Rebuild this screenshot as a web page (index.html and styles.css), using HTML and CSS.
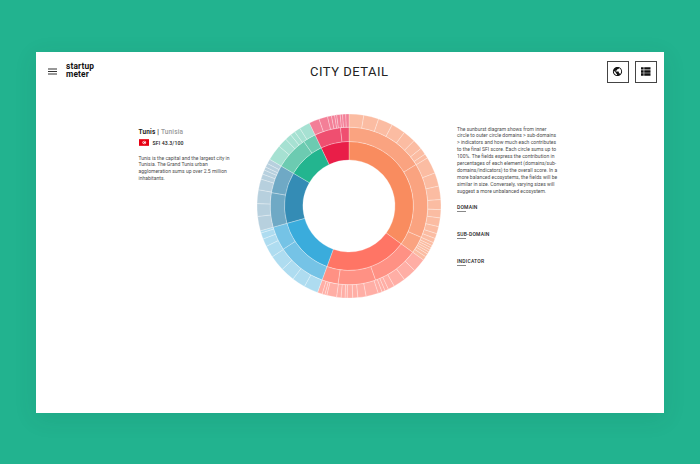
FILE: index.html
```html
<!DOCTYPE html>
<html lang="en">
<head>
<meta charset="utf-8">
<title>City detail</title>
<link rel="stylesheet" href="styles.css">
</head>
<body>
<div class="window">
  <header class="bar">
    <div class="brand">
      <svg class="menu" viewBox="0 0 9 7"><path d="M0 1h9M0 3.500h9M0 6h9"/></svg>
      <div class="logo">startup<br>meter</div>
    </div>
    <h1>CITY DETAIL</h1>
    <nav class="actions">
      <div class="button"><svg class="globe" viewBox="0 0 24 24"><path d="M12 2C6.480 2 2 6.480 2 12s4.480 10 10 10 10-4.480 10-10S17.520 2 12 2zm-1 17.930c-3.950-.490-7-3.850-7-7.930 0-.620.080-1.210.210-1.790L9 15v1c0 1.100.9 2 2 2v1.930zm6.900-2.540c-.260-.810-1-1.390-1.900-1.390h-1v-3c0-.550-.450-1-1-1H8v-2h2c.550 0 1-.450 1-1V7h2c1.100 0 2-.9 2-2v-.410c2.930 1.190 5 4.060 5 7.410 0 2.080-.8 3.970-2.100 5.390z"/></svg></div>
      <div class="button"><svg class="list" viewBox="0 0 10 9"><path d="M0 0h2.800v2.500H0zM3.400 0H10v2.500H3.400zM0 3.200h2.800v2.500H0zM3.400 3.200H10v2.500H3.400zM0 6.400h2.800v2.500H0zM3.400 6.400H10v2.500H3.400z"/></svg></div>
    </nav>
  </header>
  <main class="content">
    <section class="city">
      <h2>Tunis | <span>Tunisia</span></h2>
      <div class="score">
        <svg class="flag" viewBox="0 0 11 7"><path class="field" d="M0 0h11v7H0z"/><circle class="disc" cx="5.500" cy="3.500" r="1.900"/><circle class="field" cx="5.600" cy="3.500" r="1.200"/><circle class="disc" cx="6" cy="3.500" r=".8"/></svg>
        <span>SFI 43.3/100</span>
      </div>
      <p>Tunis is the capital and the largest city in<br>Tunisia. The Grand Tunis urban<br>agglomeration sums up over 2.5 million<br>inhabitants.</p>
    </section>
    <svg class="sunburst" id="sunburst" viewBox="-93 -93 186 186"></svg>
    <section class="info">
      <p>The sunburst diagram shows from inner<br>circle to outer circle domains &gt; sub-domains<br>&gt; indicators and how much each contributes<br>to the final SFI score. Each circle sums up to<br>100%. The fields express the contribution in<br>percentages of each element (domains/sub-<br>domains/indicators) to the overall score. In a<br>more balanced ecosystems, the fields will be<br>similar in size. Conversely, varying sizes will<br>suggest a more unbalanced ecosystem.</p>
      <h3>DOMAIN</h3>
      <h3>SUB-DOMAIN</h3>
      <h3>INDICATOR</h3>
    </section>
  </main>
</div>
<script src="chart.js"></script>
</body>
</html>
```
FILE: styles.css
```css
* { box-sizing: border-box; }
body {
  margin: 0;
  height: 464px;
  overflow: hidden;
  padding: 52px 36px 51px;
  background: #22b38f;
  color: #222;
  font-family: Roboto, "Liberation Sans", sans-serif;
}
.window {
  height: 361px;
  background: #fff;
  box-shadow: 0 5px 22px rgba(0, 60, 45, .1);
}
.bar {
  display: grid;
  grid-template-columns: 1fr auto 1fr;
  align-items: center;
  height: 39px;
  padding: 0 7.500px 0 12px;
}
.brand { display: flex; align-items: center; gap: 9px; }
.menu { width: 9px; height: 7px; stroke: #333; stroke-width: 1.150; }
.logo {
  margin-top: -2px;
  font-size: 8.400px;
  font-weight: 700;
  line-height: 7.200px;
  letter-spacing: .15px;
  color: #111;
}
h1 {
  margin: 0 6px 0 0;
  font-size: 13px;
  font-weight: 400;
  line-height: 16px;
  letter-spacing: .5px;
}
.actions { display: flex; justify-content: flex-end; gap: 6.500px; }
.button {
  display: grid;
  place-items: center;
  width: 21.500px;
  height: 22px;
  border: 1px solid #444;
}
.globe { width: 11px; height: 11px; fill: #111; }
.list { width: 9.500px; height: 9px; fill: #111; }
.content {
  display: grid;
  grid-template-columns: 117.900px 186px 110px;
  padding: 22px 0 0 102.500px;
}
p {
  margin: 0;
  color: #4c4c4c;
  font-size: 5px;
  line-height: 6.900px;
  letter-spacing: .02px;
  white-space: nowrap;
}
.city { padding-top: 15px; }
h2 {
  margin: 0;
  font-size: 6.500px;
  line-height: 9px;
  font-weight: 700;
  letter-spacing: .17px;
}
h2 span { color: #999; font-weight: 500; }
.score {
  display: flex;
  align-items: center;
  gap: 3.500px;
  height: 8px;
  margin: 1.500px 0 8px;
  font-size: 5.200px;
  font-weight: 500;
  letter-spacing: .1px;
}
.flag { width: 10.500px; height: 7px; }
.field { fill: #e70013; }
.disc { fill: #fff; }
.sunburst { width: 186px; height: 186px; }
.sunburst path { stroke: #fff; stroke-opacity: .45; stroke-width: .6; }
.info { padding: 12.500px 0 0 14.600px; }
.info p { margin-bottom: 8.500px; }
h3 {
  margin: 0 0 19px;
  font-size: 5px;
  line-height: 8px;
  font-weight: 500;
  letter-spacing: .2px;
}
h3::after {
  content: "";
  display: block;
  width: 9px;
  height: 1px;
  margin-bottom: -1px;
  background: #888;
}
```
FILE: chart.js
```js
// Segment boundaries are in degrees, clockwise from the top.
const domains = [
  { start: 0, end: 126, colors: ["#f98c5f", "#faa380", "#fbbca2"], sub: [58.3, 113.5],
    indicators: [9.3, 18.8, 28, 37, 44.9, 51.4, 55.7, 58.5, 69, 77.5, 86, 92.3, 97.5, 103, 107.5, 110.7, 113.5, 115.5, 117, 118.5, 120, 121.5, 123.5] },
  { start: 126, end: 200, colors: ["#ff7565", "#ff9184", "#ffaea5"], sub: [160.3, 188],
    indicators: [134.5, 143, 150.6, 154.7, 157, 159, 161.5, 169.3, 174.5, 177.7, 181.2, 182.5, 185, 187.8, 194, 195.3, 197] },
  { start: 200, end: 254.4, colors: ["#3aacdc", "#75c3e6", "#aedcf0"], sub: [236.7],
    indicators: [209, 217.5, 226.5, 236.5, 244, 249, 253] },
  { start: 254.4, end: 300.5, colors: ["#348cb5", "#6fa9c5", "#b7d0de"], sub: [279.8],
    indicators: [263.5, 271.5, 280.2, 287, 290.3, 293, 295, 297.5] },
  { start: 300.5, end: 334.5, colors: ["#23b58f", "#6ccbb1", "#a6e1d2"], sub: [325],
    indicators: [310.6, 316.6, 320.7, 323.8, 327.7] },
  { start: 334.5, end: 360, colors: ["#e91e48", "#ef4f70", "#f37f97"], sub: [353.8],
    indicators: [341, 346.5, 349, 351, 352.3, 354.5, 356, 358] }
];
const radii = [46, 64.5, 78.8, 92];
const svg = document.getElementById("sunburst");

function point(radius, angle) {
  const t = angle * Math.PI / 180;
  return (radius * Math.sin(t)).toFixed(2) + " " + (-radius * Math.cos(t)).toFixed(2);
}

function segment(inner, outer, from, to, color) {
  const large = to - from > 180 ? 1 : 0;
  const path = document.createElementNS("http://www.w3.org/2000/svg", "path");
  path.setAttribute("d",
    `M${point(inner, from)}L${point(outer, from)}A${outer} ${outer} 0 ${large} 1 ${point(outer, to)}` +
    `L${point(inner, to)}A${inner} ${inner} 0 ${large} 0 ${point(inner, from)}Z`);
  path.setAttribute("fill", color);
  svg.appendChild(path);
}

for (const d of domains) {
  [[], d.sub, d.indicators].forEach((splits, ring) => {
    const edges = [d.start, ...splits, d.end];
    for (let i = 1; i < edges.length; i++) {
      segment(radii[ring], radii[ring + 1], edges[i - 1], edges[i], d.colors[ring]);
    }
  });
}
```
